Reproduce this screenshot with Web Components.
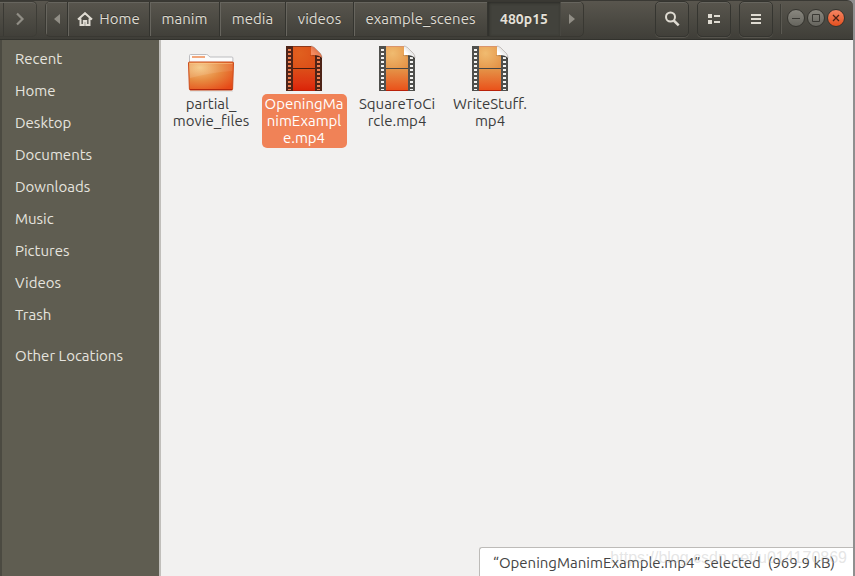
<!DOCTYPE html>
<html lang="en">
<head>
<meta charset="utf-8">
<title>480p15</title>
<style>
html, body { margin: 0; height: 100%; }
body { font: 15px/20px Ubuntu, "Noto Sans", sans-serif; color: #3c3c3c; background: #8f8f8f; overflow: hidden; }
</style>
</head>
<body>
<file-window></file-window>
<script>
const define = (name, html, setup) => {
  const t = document.createElement('template');
  t.innerHTML = html;
  customElements.define(name, class extends HTMLElement {
    constructor() {
      super();
      this.attachShadow({ mode: 'open' }).append(t.content.cloneNode(true));
    }
    connectedCallback() { if (setup) setup(this, this.shadowRoot); }
  });
};

define('path-segment', `
<style>
:host { display: block; flex: 0 0 var(--w, 70px); border-left: 1px solid #34342f; box-sizing: border-box; }
:host(:first-child) { border-left: 0; }
button { all: unset; box-sizing: border-box; width: 100%; height: 100%; display: flex; align-items: center; justify-content: center; gap: 6px;
  color: #dfdbd2; white-space: nowrap; text-shadow: 0 -1px #33332e; box-shadow: inset 1px 1px #67655e; }
:host([current]) button { background: #42423c; font-weight: 700; font-size: 14px; color: #e4e0d8; box-shadow: inset 1px 1px 3px #2b2b27; }
:host([arrow]) button { color: #918e86; }
:host(:last-child) { border-left-color: #484741; }
:host(:last-child) button { box-shadow: inset 0 1px #67655e; }
</style>
<button type="button"><slot></slot></button>`,
(el, root) => {
  if (el.getAttribute('aria-label')) root.querySelector('button').setAttribute('aria-label', el.getAttribute('aria-label'));
});

define('path-bar', `
<style>
:host { display: flex; height: 36px; box-sizing: border-box; border: 1px solid #393832; border-radius: 5px; overflow: hidden; }
</style>
<slot></slot>`);

define('tool-button', `
<style>
:host { display: block; width: 34px; height: 36px; }
button { all: unset; box-sizing: border-box; width: 100%; height: 100%; display: grid; place-items: center; color: #dfdbd2;
  border: 1px solid #353530; border-radius: 5px; box-shadow: inset 0 1px #67655e, 0 1px #56544d; }
</style>
<button type="button"><slot></slot></button>`,
(el, root) => root.querySelector('button').setAttribute('aria-label', el.getAttribute('label')));

define('window-control', `
<style>
:host { display: block; width: 18px; height: 18px; }
button { all: unset; box-sizing: border-box; width: 100%; height: 100%; display: grid; place-items: center; border-radius: 50%;
  color: #3a3934; background: linear-gradient(#89877f, #66655e); border: 1px solid #35342f; }
:host([close]) button { background: linear-gradient(#f58563, #e4501f); color: #4a2216; }
svg { display: block; }
</style>
<button type="button"><slot></slot></button>`,
(el, root) => root.querySelector('button').setAttribute('aria-label', el.getAttribute('label')));

define('header-bar', `
<style>
:host { display: flex; align-items: flex-start; height: 40px; box-sizing: border-box; background: linear-gradient(#59564e, #3f3e38);
  border-top: 1px solid #3a3934; border-bottom: 1px solid #32322d; border-top-right-radius: 6px; }
svg { display: block; }
.forward { all: unset; box-sizing: border-box; width: 37px; height: 36px; margin-right: 8px; padding-left: 4px; display: grid; place-items: center;
  color: #918e86; border: 1px solid #3d3c36; border-left: 0; border-radius: 0 5px 5px 0;
  background: linear-gradient(90deg, transparent 3px, #3a3934 3px, #3a3934 4px, transparent 4px); box-shadow: inset 0 1px #67655e; }
.tools { display: flex; gap: 8px; margin-left: auto; }
.rule { width: 1px; height: 30px; margin: 3px 5px 0 7px; background: #3d3c36; border-right: 1px solid #5b5952; }
.controls { display: flex; gap: 2px; margin: 8px 8px 0 0; }
</style>
<button class="forward" type="button" aria-label="Forward"><svg width="10" height="14" viewBox="0 0 10 14"><path d="M2 1.5 7.5 7 2 12.500" fill="none" stroke="currentColor" stroke-width="2.2"/></svg></button>
<path-bar>
  <path-segment arrow aria-label="Scroll left" style="--w:21px"><svg width="6" height="10"><path d="M6 0v10L0 5z" fill="currentColor"/></svg></path-segment>
  <path-segment style="--w:82px"><svg width="16" height="14" viewBox="0 0 16 14"><path d="M1 7.500 8 1.200l7 6.300M3.500 6.500V13h3.300V9h2.400v4h3.300V6.500" fill="none" stroke="currentColor" stroke-width="2"/></svg>Home</path-segment>
  <path-segment style="--w:70px">manim</path-segment>
  <path-segment style="--w:66px">media</path-segment>
  <path-segment style="--w:68px">videos</path-segment>
  <path-segment style="--w:134px">example_scenes</path-segment>
  <path-segment current style="--w:73px">480p15</path-segment>
  <path-segment arrow aria-label="Scroll right" style="--w:23px"><svg width="6" height="10"><path d="M0 0v10l6-5z" fill="currentColor"/></svg></path-segment>
</path-bar>
<div class="tools">
  <tool-button label="Search"><svg width="16" height="16" viewBox="0 0 16 16" fill="none" stroke="currentColor"><circle cx="6.500" cy="6" r="4.500" stroke-width="2"/><path d="m9.700 9.500 5 4.800" stroke-width="2.500"/></svg></tool-button>
  <tool-button label="View as list"><svg width="14" height="12" fill="currentColor"><path d="M1 1h4v4H1zM1 7h4v4H1zM7 2h6v2H7zM7 8h6v2H7z"/></svg></tool-button>
  <tool-button label="Menu"><svg width="10" height="12" fill="currentColor"><path d="M0 1h10v2H0zM0 5h10v2H0zM0 9h10v2H0z"/></svg></tool-button>
</div>
<div class="rule"></div>
<div class="controls">
  <window-control label="Minimize"><svg width="8" height="8"><path d="M0 4.500h8" stroke="currentColor"/></svg></window-control>
  <window-control label="Maximize"><svg width="8" height="8"><path d="M.5.5h7v7h-7z" fill="none" stroke="currentColor"/></svg></window-control>
  <window-control close label="Close"><svg width="8" height="8"><path d="m1 1 6 6M7 1 1 7" stroke="currentColor" stroke-width="1.300"/></svg></window-control>
</div>`);

define('place-link', `
<style>
:host { display: block; }
a { display: block; padding: 6px 13px; color: #e6e4df; text-decoration: none; white-space: nowrap; }
:host([apart]) { margin-top: 9px; }
</style>
<a href="#"><slot></slot></a>`);

define('side-bar', `
<style>
:host { display: block; box-sizing: border-box; flex: 0 0 161px; padding-top: 3px; background: #5f5d51; border-left: 2px solid #4b4a41; border-right: 2px solid #c1bfbb; }
</style>
<nav aria-label="Places">
  <place-link>Recent</place-link><place-link>Home</place-link><place-link>Desktop</place-link>
  <place-link>Documents</place-link><place-link>Downloads</place-link><place-link>Music</place-link>
  <place-link>Pictures</place-link><place-link>Videos</place-link><place-link>Trash</place-link>
  <place-link apart>Other Locations</place-link>
</nav>`);

define('folder-icon', `
<style>:host { display: block; } svg { display: block; }</style>
<svg width="48" height="48" viewBox="0 0 48 48">
  <defs>
    <radialGradient id="f" cx=".25" cy=".2" r=".95"><stop offset="0" stop-color="#f4c680"/><stop offset=".5" stop-color="#e7893f"/><stop offset="1" stop-color="#e64a18"/></radialGradient>
    <linearGradient id="s" x2="1"><stop stop-color="#fff" stop-opacity=".12"/><stop offset="1" stop-color="#fff" stop-opacity=".08"/></linearGradient>
  </defs>
  <path d="M3 47h43" stroke="#000" stroke-opacity=".12"/>
  <path d="M2.500 20V11.500q0-1 1-1h16q1 0 1.600.7l1.800 1.800h22q1 0 1 1V20z" fill="#fbfbfb" stroke="#bdbdc0"/>
  <path d="M5 12h13v2H5z" fill="#f2a77c"/>
  <path d="M1.500 19q0-1 1-1h43q1 0 1 1l-.9 26q0 1-1 1H3.400q-1 0-1-1z" fill="url(#f)" stroke="#cc4b1c"/>
  <path d="M2.500 19.500h43" stroke="#ffd19b" stroke-opacity=".55"/>
  <path d="M2.500 20h43l-.2 7Q26 28 3 34z" fill="url(#s)"/>
  <path d="M3 45.500h42" stroke="#b6260b"/>
</svg>`);

define('film-icon', `
<style>
:host { display: block; --a: #f0bb70; --b: #e49347; --c: #e8692b; --d: #ea521a; --reel: #50504d; --hole: #f4f4f2; --line: #444; --curl: #fff; --curl2: #d4d4d2; --top: #d9946c; }
:host([selected]) { --a: #e0601f; --b: #dc4e18; --c: #dd3512; --d: #da2407; --reel: #4e2418; --hole: #ee7f50; --line: #431a10; --curl: #f58b5f; --curl2: #d5673f; --top: #8e3a1c; }
svg { display: block; }
</style>
<svg width="48" height="48" viewBox="0 0 48 48">
  <defs>
    <radialGradient id="t" cx=".3" cy=".3" r=".9"><stop style="stop-color:var(--a)"/><stop offset="1" style="stop-color:var(--b)"/></radialGradient>
    <linearGradient id="l" x2="0" y2="1"><stop style="stop-color:var(--b)"/><stop offset=".65" style="stop-color:var(--c)"/><stop offset="1" style="stop-color:var(--d)"/></linearGradient>
    <linearGradient id="c" x1=".1" y1="1" x2=".8" y2=".2"><stop offset=".35" style="stop-color:var(--curl)"/><stop offset="1" style="stop-color:var(--curl2)"/></linearGradient>
  </defs>
  <path d="M6 2h25l11 11v34H6z" style="fill:var(--reel)"/>
  <path d="M13 3h18l4 7v14H13z" fill="url(#t)"/>
  <path d="M13 25h22v21H13z" fill="url(#l)"/>
  <path d="M13 24.500h22" style="stroke:var(--line)"/>
  <path d="M13 46.500h22" stroke="#b92109"/>
  <path d="M13 2.500h18" style="stroke:var(--top)"/>
  <path d="M9.500 5v41" fill="none" style="stroke:var(--hole)" stroke-width="3" stroke-dasharray="2 2"/>
  <path d="M38.500 13v33" fill="none" style="stroke:var(--hole)" stroke-width="3" stroke-dasharray="2 2"/>
  <path d="M30 11.500 36 10l6 4v2q-3-4-12-4z" fill="#000" fill-opacity=".2"/>
  <path d="M31 2q1.500 0 3.500 1.500L40.500 9.500Q42 11.500 42 14q-3-3.500-11-2.800z" fill="url(#c)"/>
  <path d="M31 2q1.500 0 3.500 1.500L40.500 9.500Q42 11.500 42 14" fill="none" stroke="#7d6e66" stroke-opacity=".5" stroke-width=".7"/>
</svg>`);

define('file-item', `
<style>
:host { display: block; }
button { all: unset; width: 100%; display: flex; flex-direction: column; align-items: center; gap: 2px; }
::slotted([slot=icon]) { margin-right: 1px; }
.label { box-sizing: border-box; width: 100%; padding: 1px 1px 2px 0; line-height: 17px; text-align: center; white-space: nowrap; border-radius: 5px; }
:host([selected]) .label { background: #f08257; color: #fff; }
</style>
<button type="button"><slot name="icon"></slot><span class="label"><slot></slot></span></button>`);

define('status-tip', `
<style>
:host { display: block; position: absolute; right: 0; bottom: 0; box-sizing: border-box; padding: 5px 18px 3px 13px; background: #fff;
  border: 1px solid #bdbbb8; border-right: 0; border-bottom: 0; border-top-left-radius: 3px; color: #444; }
span { display: block; white-space: pre; }
</style>
<span><slot></slot></span>`);

define('water-mark', `
<style>
:host { display: block; position: absolute; right: 6px; bottom: 8px; font: 16px/20px "Liberation Sans", Arial, sans-serif; color: rgba(190,190,190,.4); pointer-events: none; white-space: nowrap; }
</style>
<slot></slot>`);

define('file-view', `
<style>
:host { display: block; flex: 1; min-width: 0; position: relative; background: #f2f1f0; }
.files { display: grid; grid-template-columns: repeat(auto-fill, 85px); gap: 8px; padding: 4px 8px; }
</style>
<main class="files">
  <file-item><folder-icon slot="icon"></folder-icon>partial_<br>movie_files</file-item>
  <file-item selected><film-icon selected slot="icon"></film-icon>OpeningMa<br>nimExampl<br>e.mp4</file-item>
  <file-item><film-icon slot="icon"></film-icon>SquareToCi<br>rcle.mp4</file-item>
  <file-item><film-icon slot="icon"></film-icon>WriteStuff.<br>mp4</file-item>
</main>
<status-tip>“OpeningManimExample.mp4” selected  (969.9 kB)</status-tip>
<water-mark>https://blog.csdn.net/u014170869</water-mark>`);

define('file-window', `
<style>
:host { display: flex; flex-direction: column; min-height: 100vh; margin-right: 2px; }
.body { flex: 1; display: flex; }
</style>
<header-bar></header-bar>
<div class="body"><side-bar></side-bar><file-view></file-view></div>`);
</script>
</body>
</html>
